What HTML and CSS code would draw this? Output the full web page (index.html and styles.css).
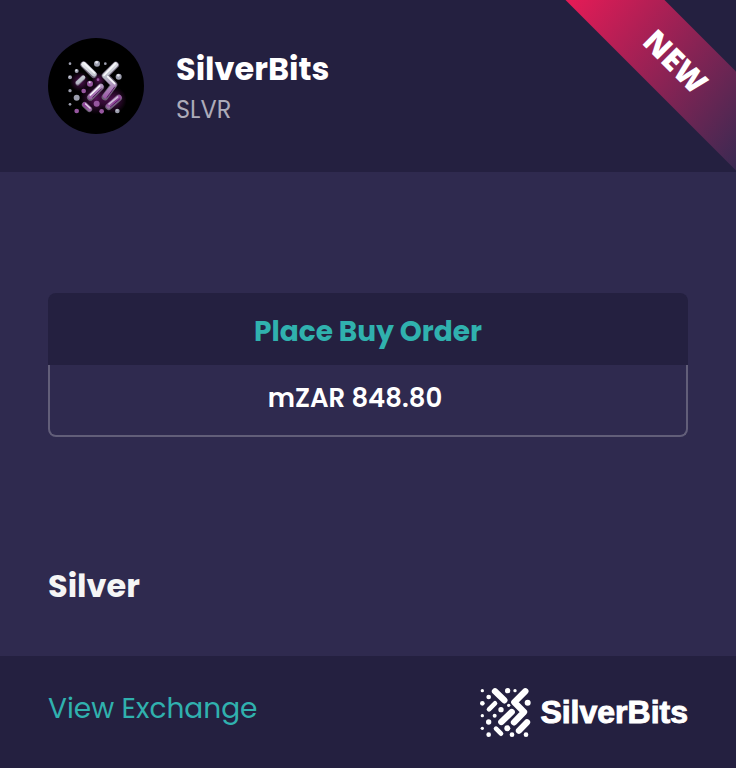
FILE: index.html
```html
<!DOCTYPE html>
<html lang="en">
<head>
    <meta charset="UTF-8">
    <meta name="viewport" content="width=device-width, initial-scale=1.0">
    <title>SilverBits</title>
    <link rel="stylesheet" href="styles.css">
</head>
<body>
    <div class="card">
        <header class="card-header">
            <!-- Token image -->
            <svg class="avatar" viewBox="24 24 288 288" aria-hidden="true">
                <defs>
                    <linearGradient id="metal" gradientUnits="userSpaceOnUse" x1="150" y1="90" x2="175" y2="255">
                        <stop offset="0" stop-color="#f1f2f5"/>
                        <stop offset="0.35" stop-color="#b9bcc8"/>
                        <stop offset="0.6" stop-color="#a878b4"/>
                        <stop offset="0.8" stop-color="#8d3d96"/>
                        <stop offset="1" stop-color="#a89cb4"/>
                    </linearGradient>
                    <radialGradient id="glow">
                        <stop offset="0" stop-color="#8a1c8c" stop-opacity="0.6"/>
                        <stop offset="1" stop-color="#8a1c8c" stop-opacity="0"/>
                    </radialGradient>
                </defs>
                <circle cx="168" cy="168" r="144" fill="#000"/>
                <circle cx="120" cy="155" r="30" fill="url(#glow)"/>
                <circle cx="176" cy="150" r="22" fill="url(#glow)"/>
                <circle cx="168" cy="205" r="48" fill="url(#glow)"/>
                <circle cx="220" cy="210" r="40" fill="url(#glow)"/>
                <g fill="none" stroke-linecap="round" stroke-linejoin="round">
                    <g stroke="#6a6074" stroke-width="20">
                        <path d="M131 104L161 134"/>
                        <path d="M227 105L195 137L222 164L195 201"/>
                        <path d="M151 202L182 171"/>
                        <path d="M206 230L236 204"/>
                        <path d="M113 159L129 143" stroke-width="15"/>
                        <path d="M134 224L148 238" stroke-width="17"/>
                    </g>
                    <g stroke="url(#metal)" stroke-width="15">
                        <path d="M131 103L162 132"/>
                        <path d="M227 104L194 137L222 165L196 198"/>
                        <path d="M151 200L183 169"/>
                        <path d="M206 228L237 202"/>
                        <path d="M113 158L130 142" stroke-width="11"/>
                        <path d="M134 223L149 237" stroke-width="13"/>
                    </g>
                    <g stroke="#f7f7fa" stroke-width="5">
                        <path d="M133 100L163 129"/>
                        <path d="M226 101L192 136M203 140L224 161"/>
                        <path d="M151 195L179 168"/>
                        <path d="M137 222L150 234" stroke="#e0d4e6"/>
                        <path d="M207 222L233 201" stroke="#cdbbd6"/>
                    </g>
                    <g stroke="#531b60" stroke-width="3">
                        <path d="M158 202L184 177"/>
                        <path d="M201 202L224 171"/>
                        <path d="M211 231L239 207"/>
                    </g>
                </g>
                <g fill="#9c9eae">
                    <circle cx="90" cy="101" r="4"/>
                    <circle cx="110" cy="123" r="6"/>
                    <circle cx="171" cy="101" r="9"/>
                    <circle cx="196" cy="101" r="4"/>
                    <circle cx="90" cy="142" r="6"/>
                    <circle cx="236" cy="140" r="9"/>
                    <circle cx="90" cy="182" r="5"/>
                    <circle cx="110" cy="203" r="9"/>
                    <circle cx="90" cy="223" r="4"/>
                    <circle cx="232" cy="243" r="7"/>
                </g>
                <g fill="#96569f">
                    <circle cx="150" cy="161" r="9"/>
                    <circle cx="174" cy="149" r="4"/>
                    <circle cx="131" cy="183" r="7"/>
                    <circle cx="170" cy="221" r="9"/>
                    <circle cx="110" cy="243" r="7"/>
                    <circle cx="185" cy="244" r="7"/>
                </g>
                <g fill="#dfe0e8">
                    <circle cx="109" cy="121" r="3"/>
                    <circle cx="170" cy="97" r="4"/>
                    <circle cx="235" cy="136" r="4"/>
                    <circle cx="149" cy="157" r="3"/>
                    <circle cx="89" cy="140" r="2"/>
                    <circle cx="231" cy="240" r="2"/>
                </g>
            </svg>
            <div class="token">
                <h1 class="token-name">SilverBits</h1>
                <p class="token-symbol">SLVR</p>
            </div>
            <div class="ribbon-corner">
                <span class="ribbon">NEW</span>
            </div>
        </header>

        <main class="card-body">
            <div class="order">
                <button type="button" class="order-button">Place Buy Order</button>
                <div class="order-price">mZAR 848.80</div>
            </div>
            <h2 class="category">Silver</h2>
        </main>

        <footer class="card-footer">
            <a href="#" class="exchange-link">View Exchange</a>
            <div class="brand">
                <svg class="brand-icon" viewBox="20 20 153 153" aria-hidden="true">
                    <g fill="none" stroke="#fff" stroke-width="19" stroke-linecap="round" stroke-linejoin="round">
                        <path d="M65 33L93 60"/>
                        <path d="M156 33L123 66L152 95L122 126"/>
                        <path d="M84 125L115 95"/>
                        <path d="M137 151L161 126"/>
                        <path d="M47 87L65 69" stroke-width="14"/>
                        <path d="M68 145L83 160" stroke-width="14"/>
                    </g>
                    <g fill="#fff">
                        <circle cx="27" cy="31" r="5"/>
                        <circle cx="46" cy="50" r="7"/>
                        <circle cx="103" cy="31" r="8"/>
                        <circle cx="125" cy="31" r="5"/>
                        <circle cx="27" cy="69" r="7"/>
                        <circle cx="163" cy="67" r="9"/>
                        <circle cx="106" cy="75" r="5"/>
                        <circle cx="83" cy="88" r="8"/>
                        <circle cx="27" cy="106" r="5"/>
                        <circle cx="64" cy="106" r="6"/>
                        <circle cx="46" cy="125" r="8"/>
                        <circle cx="27" cy="144" r="5"/>
                        <circle cx="102" cy="144" r="9"/>
                        <circle cx="46" cy="163" r="7"/>
                        <circle cx="116" cy="163" r="7"/>
                        <circle cx="158" cy="163" r="7"/>
                    </g>
                </svg>
                <span class="brand-name">SilverBits</span>
            </div>
        </footer>
    </div>
</body>
</html>
```
FILE: styles.css
```css
* {
    box-sizing: border-box;
}
body {
    margin: 0;
    font-family: Poppins, Inter, sans-serif;
    background: #2f2a4f;
    color: #fff;
}
h1, h2, p {
    margin: 0;
}
.card {
    display: flex;
    flex-direction: column;
    min-height: 100vh;
}

/* Header */
.card-header {
    position: relative;
    display: flex;
    gap: 32px;
    padding: 38px 48px;
    background: #242040;
}
.avatar {
    width: 96px;
    height: 96px;
}
.token {
    padding-top: 10px;
}
.token-name {
    font-size: 32px;
    line-height: 42px;
    font-weight: 700;
}
.token-symbol {
    font-size: 24px;
    line-height: 40px;
    font-weight: 400;
    color: #adabb9;
}

/* NEW ribbon over the top right corner */
.ribbon-corner {
    position: absolute;
    top: 0;
    right: 0;
    width: 172px;
    height: 172px;
    overflow: hidden;
}
.ribbon {
    position: absolute;
    top: 26px;
    left: -28px;
    width: 280px;
    line-height: 70px;
    text-align: center;
    font-family: "Open Sans", sans-serif;
    font-size: 31px;
    font-weight: 800;
    background: linear-gradient(83deg, #e31b56 8%, #352a52 92%);
    transform: rotate(45deg);
}

/* Body */
.card-body {
    flex: 1;
    display: flex;
    flex-direction: column;
    justify-content: space-between;
    padding: 121px 48px 50px;
}
.order {
    text-align: center;
}
.order-button {
    display: block;
    width: 100%;
    height: 72px;
    padding: 6px 0 0;
    border: none;
    border-radius: 8px 8px 0 0;
    background: #242040;
    color: #30b1ae;
    font-family: inherit;
    font-size: 28px;
    font-weight: 700;
    cursor: pointer;
}
.order-price {
    padding: 0 26px 4px 0;
    border: 2px solid #625e79;
    border-top: none;
    border-radius: 0 0 8px 8px;
    font-size: 26px;
    line-height: 66px;
    font-weight: 600;
}
.category {
    font-size: 32px;
    line-height: 40px;
    font-weight: 700;
    color: #f5f5f5;
}

/* Footer */
.card-footer {
    display: flex;
    justify-content: space-between;
    padding: 30px 48px;
    background: #242040;
}
.exchange-link {
    font-size: 28px;
    line-height: 46px;
    font-weight: 400;
    color: #30b1ae;
    text-decoration: none;
}
.brand {
    display: flex;
    align-items: center;
    gap: 9px;
}
.brand-icon {
    width: 51px;
    height: 51px;
}
.brand-name {
    font-family: "Liberation Sans", Arial, sans-serif;
    font-size: 32px;
    line-height: 52px;
    font-weight: 700;
    -webkit-text-stroke: 1px #fff;
}
```
